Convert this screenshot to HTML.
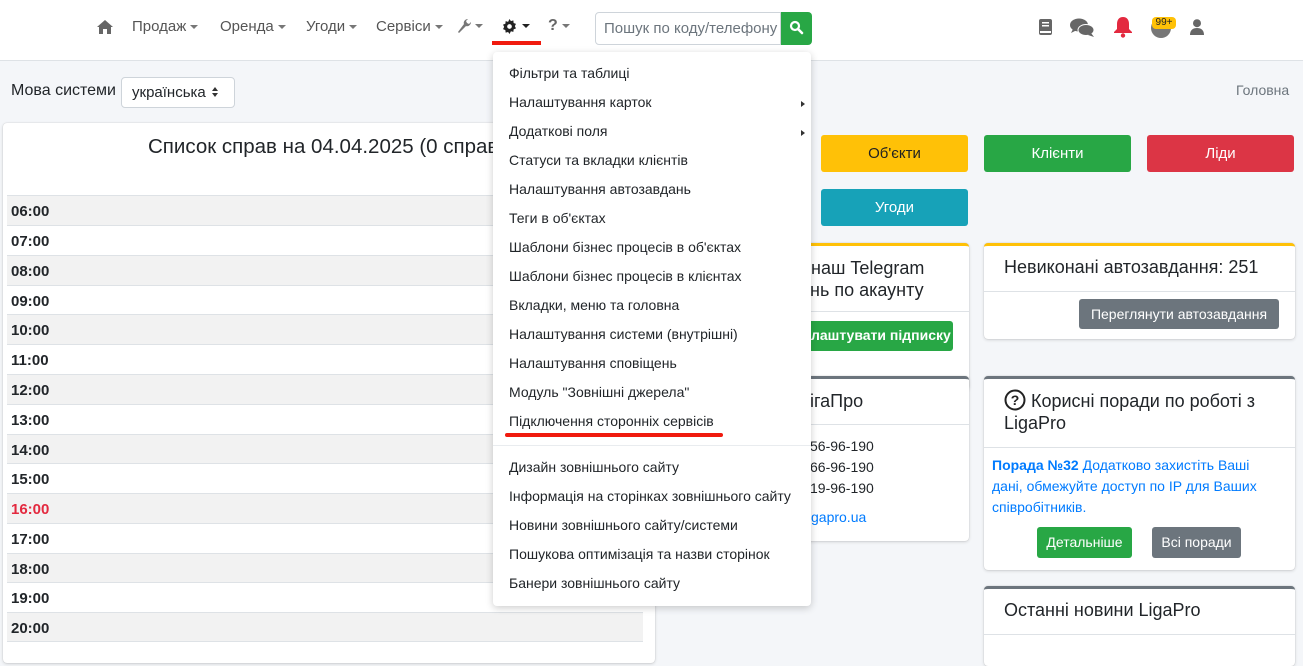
<!DOCTYPE html>
<html><head><meta charset="utf-8"><style>
*{box-sizing:border-box;margin:0;padding:0}
body{width:1303px;height:650px;overflow:hidden;background:#f4f6f9;font-family:"Liberation Sans","Noto Sans CJK SC",sans-serif;color:#212529;position:relative;font-size:14px}
.a{position:absolute}
.nav{left:0;top:0;width:1303px;height:61px;background:#fff;border-bottom:1px solid #dee2e6}
.ni{top:18px;font-size:15px;color:#555}
.car{display:inline-block;width:0;height:0;border-left:4px solid transparent;border-right:4px solid transparent;border-top:4px solid #777;vertical-align:middle;margin-left:4px}
.btn{color:#fff;font-size:15px;text-align:center;border-radius:3px}
.card{background:#fff;border-radius:4px;box-shadow:0 0 1px rgba(0,0,0,.2),0 1px 3px rgba(0,0,0,.15)}
.row{left:7px;width:636px;height:30px;font-weight:bold;font-size:15px;padding:7px 4px;border-top:1px solid #dee2e6}
.g{background:#f2f2f2}
.dd{left:493px;top:52px;width:318px;height:554px;background:#fff;border-radius:4px;box-shadow:0 2px 8px rgba(0,0,0,.2)}
.di{position:absolute;left:16px;font-size:14px;color:#212529}
.sb{border-left:4px solid #333;border-top:3px solid transparent;border-bottom:3px solid transparent;position:absolute;right:6px}
</style></head><body>
<div class="a nav"></div>
<svg class="a" style="left:97px;top:19px" width="16" height="15" viewBox="0 0 16 15"><path d="M8 1L0 8h2v7h4v-5h4v5h4V8h2z" fill="#666"/></svg>
<div class="a ni" style="left:132px">Продаж<span class="car"></span></div>
<div class="a ni" style="left:220px">Оренда<span class="car"></span></div>
<div class="a ni" style="left:306px">Угоди<span class="car"></span></div>
<div class="a ni" style="left:376px">Сервіси<span class="car"></span></div>
<svg class="a" style="left:457px;top:19px" width="15" height="15" viewBox="0 0 15 15"><path d="M1 13l1 1 7-7c2 1 5-1 5-4l-2 2-2-1-1-2 2-2C8 0 6 3 7 5z" fill="#777"/></svg>
<span class="a car" style="left:471px;top:24px"></span>
<svg class="a" style="left:502px;top:19px" width="15" height="15" viewBox="0 0 16 16"><path d="M8 0l1.5 2.2 2.6-.7.3 2.7 2.5 1-1.2 2.4 1.2 2.4-2.5 1-.3 2.7-2.6-.7L8 16l-1.5-2.2-2.6.7-.3-2.7-2.5-1L2.3 8.4 1.1 6l2.5-1 .3-2.7 2.6.7z" fill="#222"/><circle cx="8" cy="8" r="2.5" fill="#fff"/></svg>
<span class="a car" style="left:518px;top:24px;border-top-color:#222"></span>
<div class="a" style="left:492px;top:41px;width:49px;height:4px;background:#f01a0e"></div>
<div class="a ni" style="left:548px;font-weight:bold;color:#666;font-size:16px;top:17px">?<span class="car"></span></div>
<div class="a" style="left:595px;top:12px;width:186px;height:33px;border:1px solid #ced4da;border-radius:4px 0 0 4px;background:#fff;color:#6c757d;font-size:15px;padding:7px 8px;white-space:nowrap;overflow:hidden">Пошук по коду/телефону</div>
<div class="a" style="left:781px;top:12px;width:31px;height:33px;background:#28a745;border-radius:0 4px 4px 0"></div>
<svg class="a" style="left:789px;top:20px" width="15" height="15" viewBox="0 0 15 15"><circle cx="6" cy="6" r="4" stroke="#fff" stroke-width="2.2" fill="none"/><path d="M9 9l4 4" stroke="#fff" stroke-width="2.6" stroke-linecap="round"/></svg>
<svg class="a" style="left:1039px;top:19px" width="13" height="16" viewBox="0 0 13 16"><rect x="0" y="0" width="13" height="16" rx="2" fill="#666"/><rect x="3" y="3" width="7" height="1.5" fill="#fff"/><rect x="3" y="6" width="7" height="1.5" fill="#fff"/><rect x="1" y="12" width="11" height="2" fill="#fff"/></svg>
<svg class="a" style="left:1070px;top:17px" width="25" height="21" viewBox="0 0 25 21"><ellipse cx="9" cy="8" rx="9" ry="6.5" fill="#666"/><path d="M3 12l-2 4 6-3z" fill="#666"/><ellipse cx="16" cy="13" rx="8" ry="5.5" fill="#666" stroke="#fff" stroke-width="1"/><path d="M21 16l3 4-6-2z" fill="#666"/></svg>
<svg class="a" style="left:1113px;top:16px" width="20" height="22" viewBox="0 0 20 22"><path d="M10 1c-4 0-6 3-6 7v5l-3 3v1h18v-1l-3-3V8c0-4-2-7-6-7z" fill="#e3293f"/><circle cx="10" cy="19.5" r="2.2" fill="#e3293f"/></svg>
<div class="a" style="left:1151px;top:18px;width:20px;height:20px;border-radius:50%;background:#777"></div>
<div class="a" style="left:1152px;top:17px;width:24px;height:12px;background:#ffc107;border-radius:4px;font-size:10px;text-align:center;line-height:12px;color:#222">99+</div>
<svg class="a" style="left:1190px;top:19px" width="14" height="16" viewBox="0 0 14 16"><circle cx="7" cy="4.2" r="4" fill="#666"/><path d="M0 16c0-5 3-7 7-7s7 2 7 7z" fill="#666"/></svg>

<div class="a" style="left:11px;top:82px;font-size:16px">Мова системи</div>
<div class="a" style="left:121px;top:77px;width:114px;height:31px;border:1px solid #ced4da;border-radius:4px;background:#fff;font-size:15px;padding:6px 10px">українська</div>
<svg class="a" style="left:211px;top:86px" width="8" height="12" viewBox="0 0 8 12"><path d="M4 1L7 5H1zM4 11L7 7H1z" fill="#333"/></svg>
<div class="a" style="left:1236px;top:82px;font-size:14px;color:#6c757d">Головна</div>

<div class="a card" style="left:3px;top:123px;width:652px;height:540px"></div>
<div class="a" style="left:148px;top:135px;font-size:20.5px;white-space:nowrap">Список справ на 04.04.2025 (0 справ)</div>
<div class="a row g" style="top:195px">06:00</div>
<div class="a row" style="top:225px">07:00</div>
<div class="a row g" style="top:255px">08:00</div>
<div class="a row" style="top:285px">09:00</div>
<div class="a row g" style="top:314px">10:00</div>
<div class="a row" style="top:344px">11:00</div>
<div class="a row g" style="top:374px">12:00</div>
<div class="a row" style="top:404px">13:00</div>
<div class="a row g" style="top:434px">14:00</div>
<div class="a row" style="top:463px">15:00</div>
<div class="a row g" style="top:493px;color:#e3293f">16:00</div>
<div class="a row" style="top:523px">17:00</div>
<div class="a row g" style="top:553px">18:00</div>
<div class="a row" style="top:582px">19:00</div>
<div class="a row g" style="top:612px;border-bottom:1px solid #dee2e6">20:00</div>

<div class="a btn" style="left:821px;top:135px;width:147px;height:37px;background:#ffc107;color:#222;padding-top:10px">Об'єкти</div>
<div class="a btn" style="left:984px;top:135px;width:147px;height:37px;background:#28a745;padding-top:10px">Клієнти</div>
<div class="a btn" style="left:1147px;top:135px;width:147px;height:37px;background:#dc3545;padding-top:10px">Ліди</div>
<div class="a btn" style="left:821px;top:189px;width:147px;height:37px;background:#17a2b8;padding-top:10px">Угоди</div>

<div class="a card" style="left:700px;top:243px;width:269px;height:147px;border-top:3px solid #ffc107"></div>
<div class="a" style="left:700px;top:311px;width:269px;border-top:1px solid #dee2e6"></div>
<div class="a" style="left:811px;top:257px;font-size:18px;line-height:22px">наш Telegram</div>
<div class="a" style="left:800px;top:279px;font-size:18px;line-height:22px">ень по акаунту</div>
<div class="a btn" style="left:780px;top:321px;width:173px;height:30px;background:#28a745"></div>
<div class="a" style="left:811px;top:327px;font-size:14px;font-weight:bold;color:#fff">лаштувати підписку</div>

<div class="a card" style="left:700px;top:376px;width:269px;height:165px;border-top:3px solid #6c757d"></div>
<div class="a" style="left:700px;top:424px;width:269px;border-top:1px solid #dee2e6"></div>
<div class="a" style="left:810px;top:391px;font-size:18px">ігаПро</div>
<div class="a" style="left:810px;top:436px;font-size:14px;line-height:21px">56-96-190<br>66-96-190<br>19-96-190</div>
<div class="a" style="left:811px;top:509px;font-size:14px;color:#007bff">gapro.ua</div>

<div class="a card" style="left:984px;top:243px;width:311px;height:96px;border-top:3px solid #ffc107"></div>
<div class="a" style="left:984px;top:291px;width:311px;border-top:1px solid #dee2e6"></div>
<div class="a" style="left:1004px;top:257px;font-size:18px">Невиконані автозавдання: 251</div>
<div class="a btn" style="left:1079px;top:299px;width:200px;height:30px;background:#6c757d;font-size:14px;padding-top:7px">Переглянути автозавдання</div>

<div class="a card" style="left:984px;top:376px;width:311px;height:194px;border-top:3px solid #6c757d"></div>
<div class="a" style="left:984px;top:447px;width:311px;border-top:1px solid #dee2e6"></div>
<svg class="a" style="left:1004px;top:389px" width="22" height="22" viewBox="0 0 22 22"><circle cx="11" cy="11" r="9.5" stroke="#222" stroke-width="2" fill="none"/><text x="11" y="16" font-size="14" font-weight="bold" text-anchor="middle" font-family="Liberation Sans" fill="#222">?</text></svg>
<div class="a" style="left:1004px;top:390px;font-size:18px;line-height:22px;text-indent:27px;width:280px">Корисні поради по роботі з LigaPro</div>
<div class="a" style="left:992px;top:455px;font-size:14px;line-height:21px;color:#007bff;width:290px"><b>Порада №32</b> Додатково захистіть Ваші дані, обмежуйте доступ по IP для Ваших співробітників.</div>
<div class="a btn" style="left:1037px;top:527px;width:95px;height:31px;background:#28a745;font-size:14px;padding-top:7px">Детальніше</div>
<div class="a btn" style="left:1152px;top:527px;width:89px;height:31px;background:#6c757d;font-size:14px;padding-top:7px">Всі поради</div>

<div class="a card" style="left:984px;top:586px;width:311px;height:80px;border-top:3px solid #6c757d"></div>
<div class="a" style="left:984px;top:634px;width:311px;border-top:1px solid #dee2e6"></div>
<div class="a" style="left:1004px;top:600px;font-size:18px">Останні новини LigaPro</div>

<div class="a dd">
<div class="di" style="top:13px">Фільтри та таблиці</div>
<div class="di" style="top:42px">Налаштування карток</div><span class="sb" style="top:49px"></span>
<div class="di" style="top:71px">Додаткові поля</div><span class="sb" style="top:78px"></span>
<div class="di" style="top:100px">Статуси та вкладки клієнтів</div>
<div class="di" style="top:129px">Налаштування автозавдань</div>
<div class="di" style="top:158px">Теги в об'єктах</div>
<div class="di" style="top:187px">Шаблони бізнес процесів в об'єктах</div>
<div class="di" style="top:216px">Шаблони бізнес процесів в клієнтах</div>
<div class="di" style="top:245px">Вкладки, меню та головна</div>
<div class="di" style="top:274px">Налаштування системи (внутрішні)</div>
<div class="di" style="top:303px">Налаштування сповіщень</div>
<div class="di" style="top:332px">Модуль "Зовнішні джерела"</div>
<div class="di" style="top:361px">Підключення сторонніх сервісів</div>
<div style="position:absolute;left:12px;top:381px;width:218px;height:4px;background:#f01a0e;border-radius:2px"></div>
<div style="position:absolute;left:0;top:393px;width:318px;border-top:1px solid #e9ecef"></div>
<div class="di" style="top:407px">Дизайн зовнішнього сайту</div>
<div class="di" style="top:436px">Інформація на сторінках зовнішнього сайту</div>
<div class="di" style="top:465px">Новини зовнішнього сайту/системи</div>
<div class="di" style="top:494px">Пошукова оптимізація та назви сторінок</div>
<div class="di" style="top:523px">Банери зовнішнього сайту</div>
</div>
</body></html>
